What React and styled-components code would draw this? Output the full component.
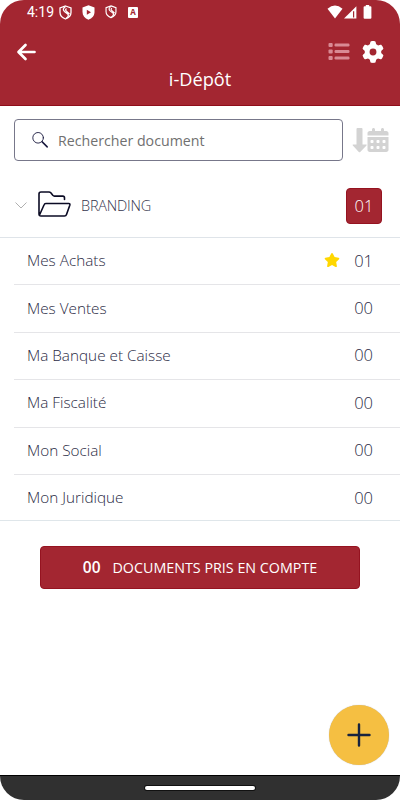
import React, { useState } from "react";
import styled, { createGlobalStyle } from "styled-components";
import { FaCalendarDays, FaGear, FaStar } from "react-icons/fa6";

const folders = [
  { name: "Mes Achats", count: "01", starred: true },
  { name: "Mes Ventes", count: "00" },
  { name: "Ma Banque et Caisse", count: "00" },
  { name: "Ma Fiscalité", count: "00" },
  { name: "Mon Social", count: "00" },
  { name: "Mon Juridique", count: "00" },
];

function ShieldSwirl({ width = 13, height = 15 }) {
  return (
    <svg width={width} height={height} viewBox="0 0 13 15" fill="none" stroke="#fff" strokeWidth="1.3">
      <path d="M6.500 1 12 2.900V7.500c0 3-2.200 5.200-5.500 6.500C3.200 12.700 1 10.500 1 7.500V2.900Z" />
      <path d="M6.500 1.500C3.800 3.500 3.800 5 5.500 6.500L9 9.300C9.800 10.500 9 12 7 13.500M7.500 3.500C6 4.800 6.500 5.500 8 6.700L10.500 9" />
    </svg>
  );
}

function ShieldPlay() {
  return (
    <svg width="13" height="15" viewBox="0 0 13 15">
      <path d="M6.500.3 12.500 2.400V7c0 3.700-2.300 6.300-6 7.700C2.800 13.300.5 10.700.5 7V2.400Z" fill="#fff" />
      <path d="M4.800 4.800 9 7.300 4.800 9.800Z" fill="#a32631" />
    </svg>
  );
}

function SignalIcons() {
  return (
    <svg width="48" height="16" viewBox="0 0 48 16" fill="#fff">
      <path d="M.5 4.700Q8 -1.700 15.500 4.700L8 14.600Z" />
      <path d="M17 14.600 29.400 2.200V14.600Z" />
      <path d="M26 7.200h1.200v6.200H26Z" fill="#a32631" />
      <path d="M38.800 1h3.400v1.300h1.200q1 0 1 1v10.500q0 1-1 1h-5.800q-1 0-1-1v-10.500q0-1 1-1h1.200Z" />
    </svg>
  );
}

function App() {
  const [search, setSearch] = useState("");
  const [open, setOpen] = useState(true);

  return (
    <>
      <GlobalStyle />
      <Screen>
        <Header>
          <StatusBar>
            <Clock>4:19</Clock>
            <StatusIcons>
              <ShieldSwirl />
              <ShieldPlay />
              <ShieldSwirl width={12} height={13.5} />
              <LetterIcon>A</LetterIcon>
            </StatusIcons>
            <SignalIcons />
          </StatusBar>
          <Toolbar>
            <IconButton aria-label="Retour">
              <svg width="20" height="18" viewBox="0 0 20 18" fill="none" stroke="#fff" strokeWidth="2.700" strokeLinecap="round" strokeLinejoin="round">
                <path d="M18.500 9H2.800M9.500 2 2.500 9l7 7" />
              </svg>
            </IconButton>
            <Actions>
              <IconButton aria-label="Liste">
                <svg width="22" height="19" viewBox="0 0 22 19" fill="#d98a94">
                  {[1, 7.5, 14].map((y) => (
                    <React.Fragment key={y}>
                      <rect x=".5" y={y} width="4.200" height="4" rx="1" />
                      <rect x="6.500" y={y + 0.6} width="15" height="2.800" rx="1.200" />
                    </React.Fragment>
                  ))}
                </svg>
              </IconButton>
              <IconButton aria-label="Paramètres">
                <FaGear size={22} color="#fff" />
              </IconButton>
            </Actions>
          </Toolbar>
          <Title>i-Dépôt</Title>
        </Header>

        <SearchRow>
          <SearchBox>
            <svg width="17" height="17" viewBox="0 0 17 17" fill="none" stroke="#17173d" strokeLinecap="round">
              <circle cx="6.100" cy="5.800" r="5.300" strokeWidth=".9" />
              <path d="m10.200 9.900 5 5" strokeWidth="1.500" />
            </svg>
            <SearchInput
              placeholder="Rechercher document"
              value={search}
              onChange={(e) => setSearch(e.target.value)}
            />
          </SearchBox>
          <SortButton aria-label="Trier par date">
            <svg width="15" height="25" viewBox="0 0 15 25" fill="#d3d3d3">
              <path d="M4.500 1q0-1 1-1h4q1 0 1 1v15.500h3.600q1.100 0 .4.900l-6.300 6.500q-.7.700-1.400 0l-6-6.500q-.7-.9.400-.9h3.300Z" />
            </svg>
            <FaCalendarDays size={24} color="#d3d3d3" />
          </SortButton>
        </SearchRow>

        <FolderHeader onClick={() => setOpen(!open)}>
          <svg width="12" height="7" viewBox="0 0 12 7" fill="none" stroke="#b0b0b0">
            <path d="m.5.5 5.500 5.500L11.500.5" />
          </svg>
          <FolderIcon width="33" height="26" viewBox="0 0 33 26" fill="none" stroke="#0b0b24" strokeWidth="1.600" strokeLinejoin="round" strokeLinecap="round">
            <path d="M26.500 8.500V6.800q0-1.700-1.700-1.700H16.500q-1 0-1.700-.8l-2-2.500Q12 1 11 1H3Q1 1 1 3v20q0 2 2 2h23.500q1.500 0 2-1.500l3.300-9.300q.5-1.700-1-1.700H7.800q-1.300 0-1.800 1.500L1.500 24" />
          </FolderIcon>
          <FolderName>BRANDING</FolderName>
          <Badge>01</Badge>
        </FolderHeader>

        {open && (
          <FolderList>
            {folders.map((folder) => (
              <FolderRow key={folder.name}>
                <span>{folder.name}</span>
                <RowEnd>
                  {folder.starred && <FaStar size={16} color="#ffd700" />}
                  <Count>{folder.count}</Count>
                </RowEnd>
              </FolderRow>
            ))}
          </FolderList>
        )}

        <SubmitButton>
          <b>00</b>
          <span>DOCUMENTS PRIS EN COMPTE</span>
        </SubmitButton>

        <BottomArea>
          <AddButton aria-label="Ajouter">
            <svg width="24" height="24" viewBox="0 0 24 24" stroke="#17233f" strokeWidth="2.400" strokeLinecap="round">
              <path d="M12 1.500v21M1.500 12h21" />
            </svg>
          </AddButton>
        </BottomArea>
        <NavBar>
          <NavHandle />
        </NavBar>
      </Screen>
    </>
  );
}

export default App;

const GlobalStyle = createGlobalStyle`
  * {
    box-sizing: border-box;
  }
  body {
    margin: 0;
    background: #fff;
    font-family: "Open Sans", sans-serif;
  }
  button {
    border: 0;
    padding: 0;
    background: none;
    font-family: inherit;
    cursor: pointer;
  }
  svg {
    display: block;
    flex-shrink: 0;
  }
`;

const Screen = styled.div`
  display: flex;
  flex-direction: column;
  width: 400px;
  height: 800px;
  overflow: hidden;
  border-radius: 24px;
  background: #fff;
`;

const Header = styled.header`
  height: 106px;
  flex-shrink: 0;
  background: #a32631;
  border-bottom: 1px solid #8f0d1a;
  color: #fff;
`;

const StatusBar = styled.div`
  display: flex;
  align-items: center;
  height: 24px;
  padding: 0 25px 0 27px;
`;

const Clock = styled.span`
  width: 32px;
  font-family: Roboto, sans-serif;
  font-size: 14px;
  line-height: 24px;
`;

const StatusIcons = styled.div`
  display: flex;
  align-items: center;
  gap: 10px;
  flex: 1;
`;

const LetterIcon = styled.span`
  width: 10px;
  height: 11px;
  margin-left: 1px;
  border-radius: 1px;
  background: #fff;
  color: #a32631;
  font-size: 8px;
  font-weight: 700;
  line-height: 10px;
  text-align: center;
`;

const Toolbar = styled.div`
  display: flex;
  align-items: center;
  justify-content: space-between;
  height: 44px;
  padding: 11px 16px 0;
`;

const IconButton = styled.button`
  display: flex;
`;

const Actions = styled.div`
  display: flex;
  align-items: center;
  gap: 12px;
`;

const Title = styled.h1`
  margin: 0;
  font-size: 18.2px;
  font-weight: 400;
  line-height: 22px;
  text-align: center;
`;

const SearchRow = styled.div`
  display: flex;
  gap: 9px;
  padding: 13px 11px 0 14px;
`;

const SearchBox = styled.label`
  display: flex;
  align-items: center;
  gap: 9px;
  width: 329px;
  height: 42px;
  padding-left: 17px;
  flex-shrink: 0;
  border: 1px solid #77778a;
  border-radius: 4px;
`;

const SearchInput = styled.input`
  flex: 1;
  padding: 0;
  border: 0;
  outline: 0;
  background: none;
  font-family: inherit;
  font-size: 14.2px;

  &::placeholder {
    color: #707070;
    opacity: 1;
  }
`;

const SortButton = styled.button`
  display: flex;
  align-items: center;

  svg + svg {
    width: 22px;
    margin-top: -1px;
  }
`;

const FolderHeader = styled.div`
  display: flex;
  align-items: center;
  height: 77px;
  padding: 13px 18px 0 15px;
  border-bottom: 1px solid #dfe4e9;
`;

const FolderIcon = styled.svg`
  margin: -4px 0 0 11px;
`;

const FolderName = styled.span`
  flex: 1;
  margin-left: 10px;
  color: #35354d;
  font-size: 14.5px;
  font-weight: 300;
  letter-spacing: -0.2px;
`;

const Badge = styled.span`
  width: 36px;
  height: 36px;
  border: 1px solid #951320;
  border-radius: 4px;
  background: #a32631;
  color: #fff;
  font-size: 16.5px;
  font-weight: 300;
  line-height: 34px;
  text-align: center;
`;

const FolderList = styled.div`
  padding-left: 14px;
  border-bottom: 1px solid #dfe6ea;
`;

const FolderRow = styled.div`
  display: flex;
  align-items: center;
  justify-content: space-between;
  height: 47.4px;
  padding: 0 27px 2px 13px;
  border-bottom: 1px solid #e5e5e8;
  color: #2b2b45;
  font-size: 15.3px;
  font-weight: 300;

  &:last-child {
    height: 45px;
    padding-bottom: 0;
    border-bottom: 0;
  }
`;

const RowEnd = styled.div`
  display: flex;
  align-items: center;
  gap: 14px;
`;

const Count = styled.span`
  font-size: 16.5px;
`;

const SubmitButton = styled.button`
  display: flex;
  align-items: center;
  justify-content: center;
  gap: 12px;
  width: 320px;
  height: 43px;
  margin: 25px auto 0;
  flex-shrink: 0;
  border: 1px solid #951320;
  border-radius: 4px;
  background: #a32631;
  color: #fff;
  font-size: 14.3px;

  b {
    font-size: 15.5px;
    font-weight: 600;
  }
`;

const BottomArea = styled.div`
  display: flex;
  align-items: flex-end;
  justify-content: flex-end;
  flex: 1;
  padding: 0 11px 10px;
`;

const AddButton = styled.button`
  display: flex;
  align-items: center;
  justify-content: center;
  width: 60px;
  height: 60px;
  border-radius: 50%;
  background: #f5bf42;
  box-shadow: 0 0 1px rgba(0, 0, 0, 0.3);
`;

const NavBar = styled.div`
  display: flex;
  justify-content: center;
  height: 25px;
  padding-top: 10px;
  flex-shrink: 0;
  border-top: 1px solid #000;
  background: #303030;
`;

const NavHandle = styled.div`
  width: 110px;
  height: 4px;
  border-radius: 2px;
  background: #fff;
  box-shadow: 0 0 0 1px #111;
`;
